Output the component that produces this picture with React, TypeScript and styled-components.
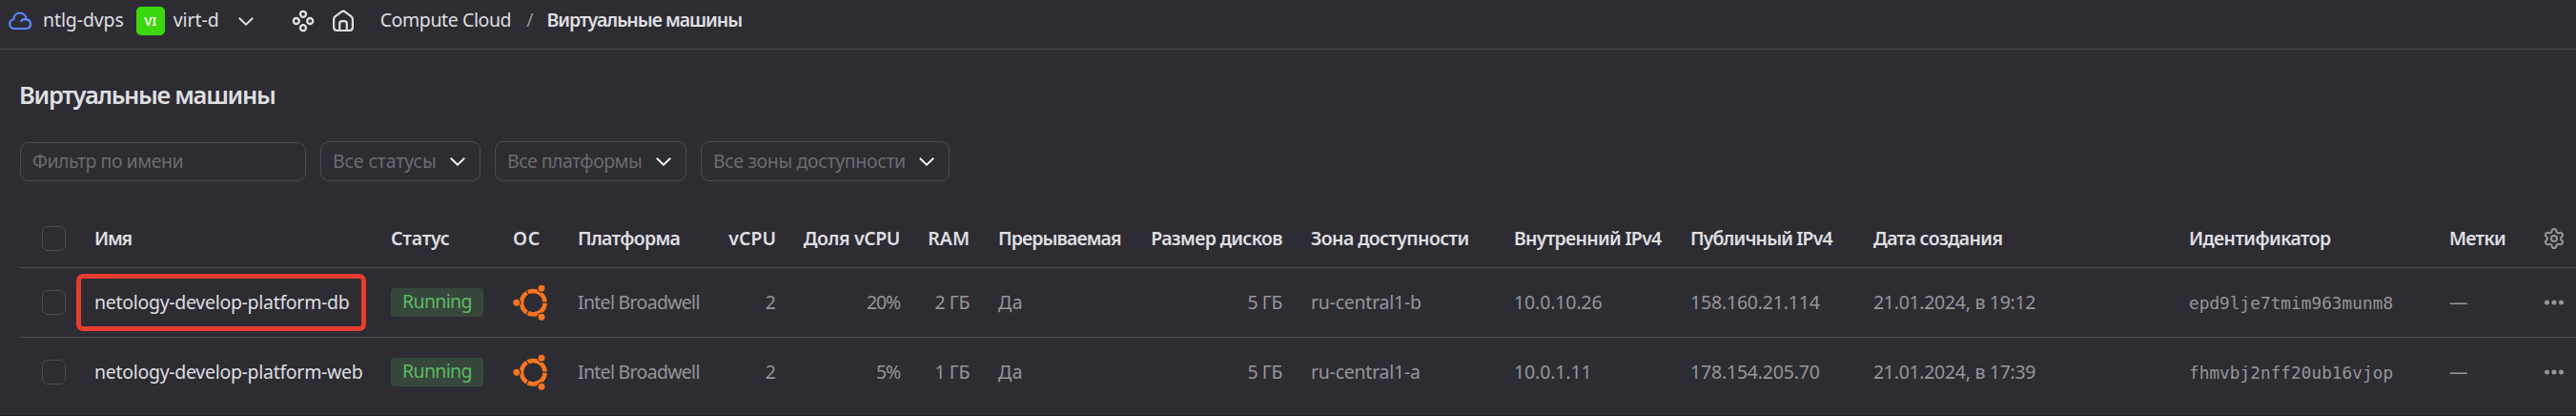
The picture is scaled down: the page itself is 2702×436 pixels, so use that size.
import React from 'react';
import styled, { createGlobalStyle } from 'styled-components';
import { Settings } from 'lucide-react';

const BG = '#2d2c33';
const LINE = '#4b4a50';
const TEXT = '#dfdfe0';
const MUTED = '#969599';

const GlobalStyle = createGlobalStyle`
  * { box-sizing: border-box; }
  body {
    margin: 0;
    background: ${BG};
    color: ${TEXT};
    font-family: "Noto Sans", sans-serif;
    font-size: 19.5px;
    line-height: 27px;
    overflow: hidden;
  }
`;

const Page = styled.div`
  height: 436px;
  border-bottom: 1px solid #222126;
  overflow: hidden;
`;

const Text = styled.span<{ $ls?: number; $bold?: boolean; $gap?: number }>`
  padding-bottom: 1px;
  white-space: nowrap;
  letter-spacing: ${(p) => p.$ls ?? 0}px;
  font-weight: ${(p) => (p.$bold ? 600 : 400)};
  margin-left: ${(p) => p.$gap ?? 0}px;
`;

const Slash = styled(Text)`
  color: ${MUTED};
`;

const Header = styled.header`
  display: flex;
  align-items: center;
  height: 52px;
  padding: 0 0 7px 9px;
  border-bottom: 1px solid ${LINE};
  ${Text} { padding-bottom: 3px; }
`;

const Icon = styled.svg<{ $gap?: number }>`
  display: block;
  flex: none;
  margin-left: ${(p) => p.$gap ?? 0}px;
`;

const Avatar = styled.span`
  display: flex;
  align-items: center;
  justify-content: center;
  width: 30px;
  height: 30px;
  margin-left: 13px;
  border-radius: 5px;
  background: #3bd80e;
  color: #fff;
  font-size: 13px;
  font-weight: 600;
`;

const Title = styled.h1`
  margin: 32px 0 0 20px;
  font-size: 25.5px;
  line-height: 30px;
  font-weight: 600;
  letter-spacing: -1.29px;
`;

const Filters = styled.div`
  display: flex;
  align-items: flex-end;
  gap: 15px;
  margin: 34px 0 0 21px;
`;

const Field = styled.div<{ $width: number; $height: number }>`
  display: flex;
  align-items: center;
  justify-content: space-between;
  width: ${(p) => p.$width}px;
  height: ${(p) => p.$height}px;
  padding: 0 15px ${(p) => p.$height % 2}px 12px;
  border: 1px solid ${LINE};
  border-radius: 9px;
  color: #6c6b70;
`;

const Table = styled.div`
  margin: 30px 0 0 21px;
`;

const Row = styled.div<{ $head?: boolean }>`
  display: grid;
  grid-template-columns: 63px 311px 128px 68px 159px 79px 130px 73px 160px 168px 213px 185px 192px 331px 273px 100px 48px;
  align-items: center;
  height: ${(p) => (p.$head ? 61 : 73)}px;
  border-bottom: 1px solid ${LINE};
  color: ${(p) => (p.$head ? TEXT : MUTED)};
  &:last-child { border-bottom-color: transparent; }
`;

const Cell = styled.div<{ $right?: boolean }>`
  position: relative;
  display: flex;
  align-items: center;
  justify-content: ${(p) => (p.$right ? 'flex-end' : 'flex-start')};
  padding: 0 15px;
`;

const CheckCell = styled.div`
  padding-left: 23px;
`;

const Checkbox = styled.div`
  width: 25px;
  height: 26px;
  border: 1px solid ${LINE};
  border-radius: 6px;
`;

const Name = styled(Text)`
  color: ${TEXT};
`;

const Highlight = styled.div`
  position: absolute;
  left: -4px;
  top: 50%;
  width: 304px;
  height: 60px;
  transform: translateY(-50%);
  border: 5px solid #e83c30;
  border-radius: 7px;
`;

const Status = styled.span`
  width: 97px;
  height: 30px;
  padding-left: 12px;
  border-radius: 4px;
  background: #37473c;
  color: #5cbb61;
  line-height: 27px;
  letter-spacing: -0.64px;
`;

const Mono = styled.span`
  font-family: "DejaVu Sans Mono", monospace;
  font-size: 17.8px;
  white-space: nowrap;
`;

const ActionCell = styled.div<{ $inset?: number }>`
  display: flex;
  padding-left: ${(p) => p.$inset ?? 13}px;
  color: ${MUTED};
`;

const Cloud = () => (
  <Icon width="25" height="20" viewBox="0 0 25 20" fill="none" stroke="#5a87ff" strokeWidth="2.2" strokeLinecap="round">
    <path d="M5.9 18H18.8A4.9 4.9 0 0 0 18.8 8.3C18.3 4.2 15.4 1.7 11.8 1.7C8 1.7 5.4 4.4 5.3 8.2C2.8 8.8 1.1 10.7 1.1 13.1C1.1 15.9 3.2 18 5.9 18Z" />
    <path d="M13.2 10C14.3 8.6 16.3 7.8 18.4 8.4" />
  </Icon>
);

const Chevron = ({ gap, color = '#f0f0f0' }: { gap?: number; color?: string }) => (
  <Icon $gap={gap} width="16" height="9" viewBox="0 0 16 9" fill="none" stroke={color} strokeWidth="2">
    <path d="M.8.8 8 7.7 15.2.8" />
  </Icon>
);

const Services = () => (
  <Icon $gap={40} width="24" height="24" viewBox="0 0 24 24" fill="none" stroke={TEXT} strokeWidth="2.3">
    <circle cx="12" cy="4.8" r="3" />
    <circle cx="4.8" cy="12" r="3" />
    <circle cx="19.2" cy="12" r="3" />
    <circle cx="12" cy="19.2" r="3" />
  </Icon>
);

const Home = () => (
  <Icon $gap={18} width="24" height="24" viewBox="0 0 24 24" fill="none" stroke={TEXT} strokeWidth="2.2" strokeLinejoin="round">
    <path d="M2.1 10.3C2.1 9 2.7 7.9 3.7 7.1L10.2 2.3C11.3 1.5 12.7 1.5 13.8 2.3L20.3 7.1C21.3 7.9 21.9 9 21.9 10.3V18.6C21.9 20.6 20.5 22 18.5 22H5.5C3.5 22 2.1 20.6 2.1 18.6Z" />
    <path d="M8.2 22V14.8C8.2 13.2 9.2 12.2 10.8 12.2H13.2C14.8 12.2 15.8 13.2 15.8 14.8V22" />
  </Icon>
);

const Ubuntu = () => (
  <Icon width="37" height="38" viewBox="0 0 37 38">
    <circle cx="21.3" cy="19.2" r="12.3" fill="none" stroke="#f9751f" strokeWidth="4.5" />
    <g stroke={BG} strokeWidth="1.2">
      <path d="M28 19.2H37M17.9 13.4 12.8 4.5M17.9 25 12.8 33.9" />
    </g>
    <g fill="#f9751f" stroke={BG} strokeWidth="1.2">
      <circle cx="3.8" cy="19.2" r="4.1" />
      <circle cx="30" cy="4.2" r="4.1" />
      <circle cx="30" cy="34.2" r="4.1" />
    </g>
  </Icon>
);

const Dots = () => (
  <Icon width="22" height="6" viewBox="0 0 22 6" fill={MUTED}>
    <circle cx="3.5" cy="3" r="2.5" />
    <circle cx="11" cy="3" r="2.5" />
    <circle cx="18.5" cy="3" r="2.5" />
  </Icon>
);

type Head = { label: string; ls: number; right?: boolean };

const heads: Head[] = [
  { label: 'Имя', ls: -1.2 },
  { label: 'Статус', ls: -0.2 },
  { label: 'ОС', ls: 0.8 },
  { label: 'Платформа', ls: -0.7 },
  { label: 'vCPU', ls: 0, right: true },
  { label: 'Доля vCPU', ls: -0.4, right: true },
  { label: 'RAM', ls: 0, right: true },
  { label: 'Прерываемая', ls: -0.91 },
  { label: 'Размер дисков', ls: -0.65, right: true },
  { label: 'Зона доступности', ls: -0.62 },
  { label: 'Внутренний IPv4', ls: -0.73 },
  { label: 'Публичный IPv4', ls: -0.9 },
  { label: 'Дата создания', ls: -0.65 },
  { label: 'Идентификатор', ls: -0.64 },
  { label: 'Метки', ls: -0.75 },
];

const machines = [
  {
    name: 'netology-develop-platform-db', share: '20%', ram: '2 ГБ', zone: 'ru-central1-b',
    internal: '10.0.10.26', external: '158.160.21.114', created: '21.01.2024, в 19:12',
    id: 'epd9lje7tmim963munm8', marked: true,
  },
  {
    name: 'netology-develop-platform-web', share: '5%', ram: '1 ГБ', zone: 'ru-central1-a',
    internal: '10.0.1.11', external: '178.154.205.70', created: '21.01.2024, в 17:39',
    id: 'fhmvbj2nff20ub16vjop', marked: false,
  },
];

const selects = [
  { label: 'Все статусы', width: 168, ls: -0.13 },
  { label: 'Все платформы', width: 201, ls: -0.54 },
  { label: 'Все зоны доступности', width: 261, ls: -0.36 },
];

export default function App() {
  return (
    <Page>
      <GlobalStyle />
      <Header>
        <Cloud />
        <Text $gap={11} $ls={-0.1}>ntlg-dvps</Text>
        <Avatar>VI</Avatar>
        <Text $gap={9} $ls={-0.06}>virt-d</Text>
        <Chevron gap={20} color={TEXT} />
        <Services />
        <Home />
        <Text $gap={27} $ls={-0.4}>Compute Cloud</Text>
        <Slash $gap={16}>/</Slash>
        <Text $gap={14} $ls={-1.02} $bold>Виртуальные машины</Text>
      </Header>
      <Title>Виртуальные машины</Title>
      <Filters>
        <Field $width={300} $height={41}>
          <Text $ls={-0.48}>Фильтр по имени</Text>
        </Field>
        {selects.map((s) => (
          <Field key={s.label} $width={s.width} $height={42}>
            <Text $ls={s.ls}>{s.label}</Text>
            <Chevron />
          </Field>
        ))}
      </Filters>
      <Table>
        <Row $head>
          <CheckCell><Checkbox /></CheckCell>
          {heads.map((h) => (
            <Cell key={h.label} $right={h.right}>
              <Text $bold $ls={h.ls}>{h.label}</Text>
            </Cell>
          ))}
          <ActionCell><Settings size={24} strokeWidth={2.1} /></ActionCell>
        </Row>
        {machines.map((m) => (
          <Row key={m.id}>
            <CheckCell><Checkbox /></CheckCell>
            <Cell>
              <Name $ls={-0.29}>{m.name}</Name>
              {m.marked && <Highlight />}
            </Cell>
            <Cell><Status>Running</Status></Cell>
            <Cell><Ubuntu /></Cell>
            <Cell><Text $ls={-0.7}>Intel Broadwell</Text></Cell>
            <Cell $right><Text>2</Text></Cell>
            <Cell $right><Text $ls={-1.2}>{m.share}</Text></Cell>
            <Cell $right><Text $ls={-0.38}>{m.ram}</Text></Cell>
            <Cell><Text $ls={0.5}>Да</Text></Cell>
            <Cell $right><Text $ls={-0.38}>5 ГБ</Text></Cell>
            <Cell><Text $ls={-0.24}>{m.zone}</Text></Cell>
            <Cell><Text $ls={-0.12}>{m.internal}</Text></Cell>
            <Cell><Text $ls={-0.19}>{m.external}</Text></Cell>
            <Cell><Text $ls={-0.3}>{m.created}</Text></Cell>
            <Cell><Mono>{m.id}</Mono></Cell>
            <Cell><Text>—</Text></Cell>
            <ActionCell $inset={14}><Dots /></ActionCell>
          </Row>
        ))}
      </Table>
    </Page>
  );
}
